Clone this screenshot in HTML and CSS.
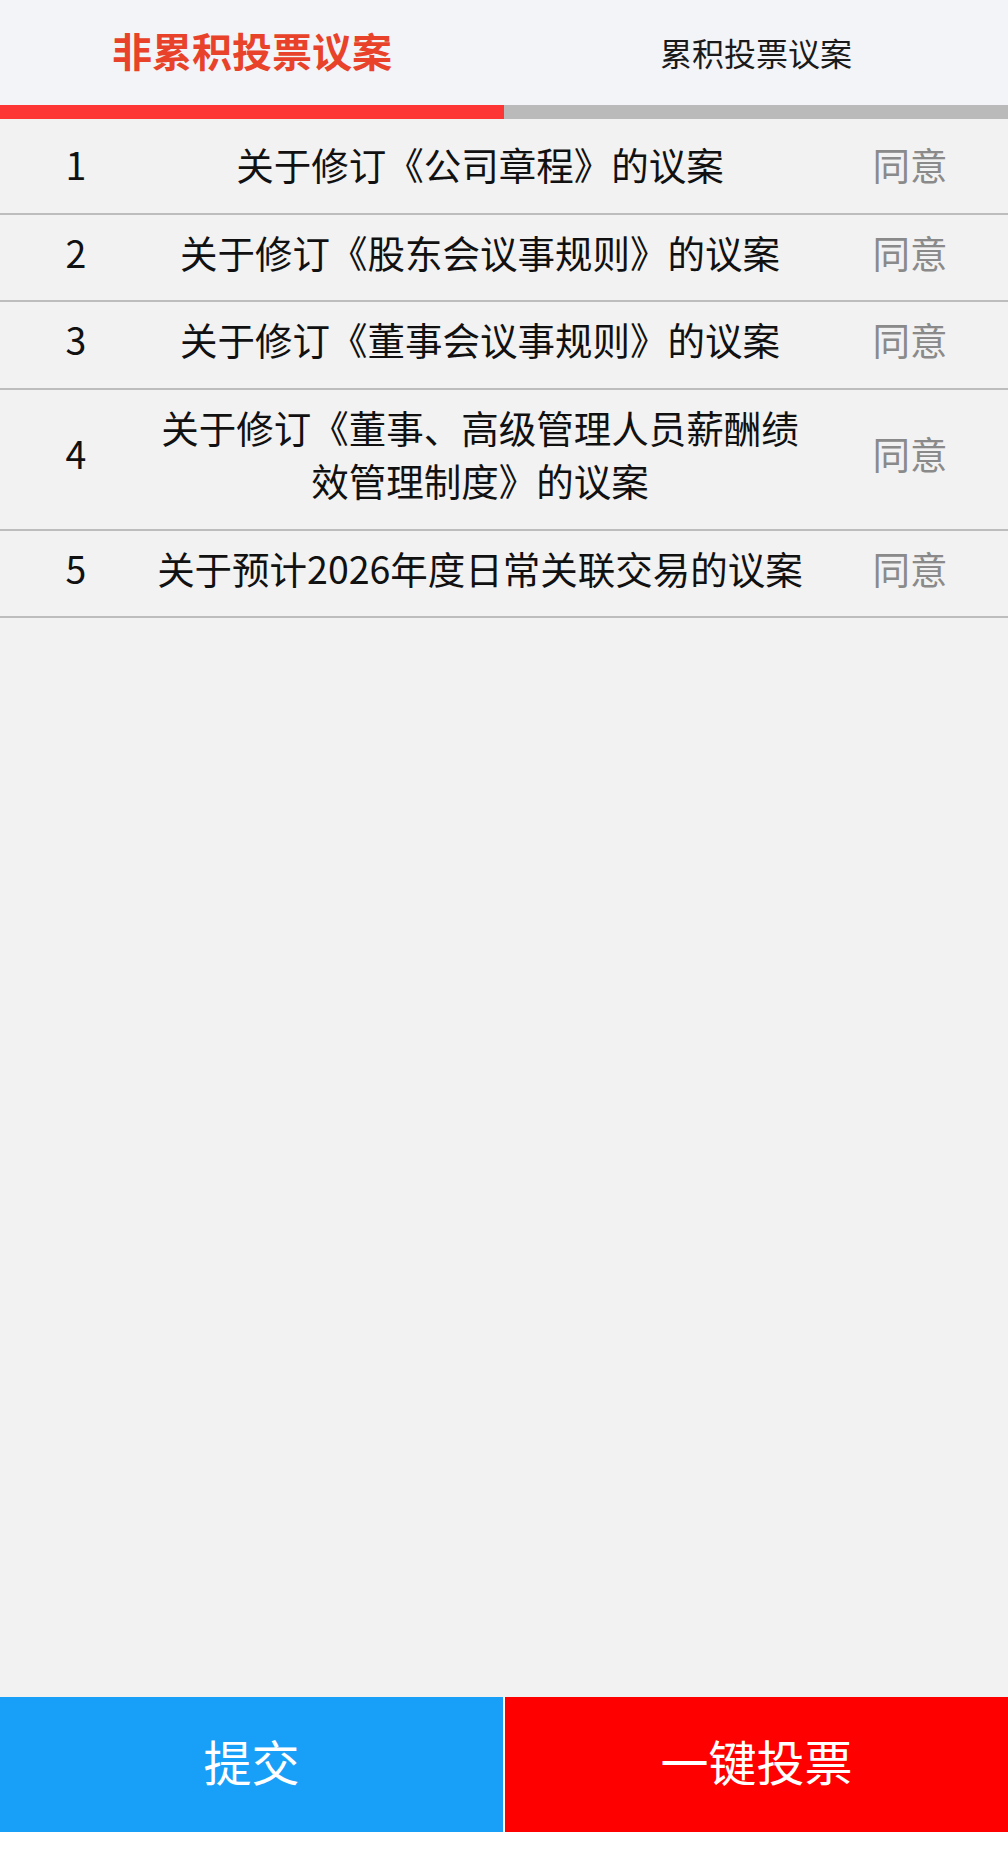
FILE: index.html
```html
<!DOCTYPE html>
<html lang="zh-CN">
<head>
<meta charset="utf-8">
<title>议案投票</title>
<link rel="stylesheet" href="styles.css">
</head>
<body>
<div class="page">
  <div class="tabs">
    <div class="tab tab-active">非累积投票议案</div>
    <div class="tab">累积投票议案</div>
  </div>
  <div class="indicator">
    <div class="ind-on"></div>
    <div class="ind-off"></div>
  </div>
  <div class="list">
    <div class="row"><div class="num">1</div><div class="title">关于修订《公司章程》的议案</div><div class="vote">同意</div></div>
    <div class="row"><div class="num">2</div><div class="title">关于修订《股东会议事规则》的议案</div><div class="vote">同意</div></div>
    <div class="row"><div class="num">3</div><div class="title">关于修订《董事会议事规则》的议案</div><div class="vote">同意</div></div>
    <div class="row"><div class="num">4</div><div class="title">关于修订《董事、高级管理人员薪酬绩效管理制度》的议案</div><div class="vote">同意</div></div>
    <div class="row"><div class="num">5</div><div class="title">关于预计2026年度日常关联交易的议案</div><div class="vote">同意</div></div>
  </div>
  <div class="actions">
    <div class="btn btn-submit">提交</div>
    <div class="btn btn-all">一键投票</div>
  </div>
  <div class="bottom-space"></div>
</div>
</body>
</html>
```
FILE: styles.css
```css
html, body {
  margin: 0;
  padding: 0;
}
body {
  background: #f2f2f2;
  font-family: "Noto Sans CJK SC", "Noto Sans", sans-serif;
  color: #111;
}
.page {
  display: flex;
  flex-direction: column;
  height: 1857px;
}
.tabs {
  display: flex;
  height: 105px;
  background: #f3f4f8;
}
.tab {
  flex: 1;
  display: flex;
  align-items: center;
  justify-content: center;
  font-size: 32px;
  color: #1a1a1a;
  padding-bottom: 2px;
}
.tab-active {
  font-size: 40px;
  font-weight: 700;
  color: #e8432a;
  padding-bottom: 6px;
}
.indicator {
  display: flex;
  height: 14px;
}
.ind-on {
  flex: 1;
  background: #fd3535;
}
.ind-off {
  flex: 1;
  background: #bababa;
}
.list {
  flex: 1;
  margin-top: 8px;
}
.row {
  display: flex;
  align-items: center;
  padding: 10px 0 22px;
  border-bottom: 2px solid #bdbdbd;
  font-size: 37.5px;
  line-height: 53.5px;
}
.num {
  width: 152px;
  text-align: center;
}
.title {
  width: 656px;
  text-align: center;
  color: #111;
}
.vote {
  flex: 1;
  text-align: center;
  color: #8a8a8a;
  padding-left: 4px;
}
.actions {
  display: flex;
  height: 135px;
  gap: 2px;
  background: #ffffff;
}
.btn {
  flex: 1;
  display: flex;
  align-items: center;
  justify-content: center;
  color: #ffffff;
  font-size: 48px;
  padding-bottom: 10px;
}
.btn-submit {
  background: #189ff8;
}
.btn-all {
  background: #ff0000;
}
.bottom-space {
  height: 25px;
  background: #ffffff;
}
```
